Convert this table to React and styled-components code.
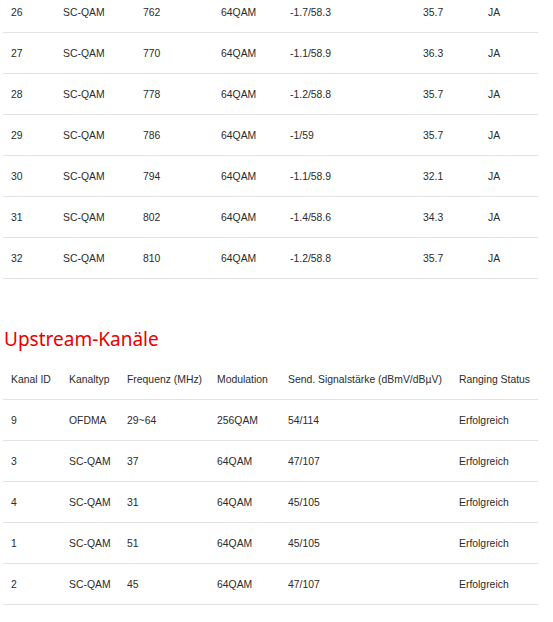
import styled, { createGlobalStyle } from "styled-components";

const downstream = [
  ["26", "SC-QAM", "762", "64QAM", "-1.7/58.3", "35.7", "JA"],
  ["27", "SC-QAM", "770", "64QAM", "-1.1/58.9", "36.3", "JA"],
  ["28", "SC-QAM", "778", "64QAM", "-1.2/58.8", "35.7", "JA"],
  ["29", "SC-QAM", "786", "64QAM", "-1/59", "35.7", "JA"],
  ["30", "SC-QAM", "794", "64QAM", "-1.1/58.9", "32.1", "JA"],
  ["31", "SC-QAM", "802", "64QAM", "-1.4/58.6", "34.3", "JA"],
  ["32", "SC-QAM", "810", "64QAM", "-1.2/58.8", "35.7", "JA"],
];

const upstreamHead = [
  "Kanal ID",
  "Kanaltyp",
  "Frequenz (MHz)",
  "Modulation",
  "Send. Signalstärke (dBmV/dBµV)",
  "Ranging Status",
];

const upstream = [
  ["9", "OFDMA", "29~64", "256QAM", "54/114", "Erfolgreich"],
  ["3", "SC-QAM", "37", "64QAM", "47/107", "Erfolgreich"],
  ["4", "SC-QAM", "31", "64QAM", "45/105", "Erfolgreich"],
  ["1", "SC-QAM", "51", "64QAM", "45/105", "Erfolgreich"],
  ["2", "SC-QAM", "45", "64QAM", "47/107", "Erfolgreich"],
];

const GlobalStyle = createGlobalStyle`
  body {
    margin: 0;
    background: #fff;
    font-family: "Liberation Sans", Arial, sans-serif;
    color: #2b2b2b;
    overflow: hidden;
  }
`;

const Page = styled.div`
  padding: 0 15px 0 3px;
  margin-top: -8px;
`;

const Table = styled.div`
  display: flex;
  flex-direction: column;
`;

const Row = styled.div`
  display: grid;
  grid-template-columns: ${({ cols }) => cols};
  height: 40px;
  align-items: center;
  border-bottom: 1px solid #e2e2e2;
  font-size: 10.4px;
`;

const Cell = styled.div`
  padding-left: 8px;
  white-space: nowrap;
`;

const Title = styled.h2`
  margin: 48px 0 8px 1px;
  font-family: "Noto Sans", sans-serif;
  font-weight: 400;
  font-size: 19px;
  line-height: 24px;
  color: #e60000;
`;

const DOWN_COLS = "52px 80px 78px 69px 133px 65px 58px";
const UP_COLS = "58px 58px 90px 71px 171px 87px";

export default function App() {
  return (
    <Page>
      <GlobalStyle />
      <Table>
        {downstream.map((r) => (
          <Row key={r[0]} cols={DOWN_COLS}>
            {r.map((c, i) => (
              <Cell key={i}>{c}</Cell>
            ))}
          </Row>
        ))}
      </Table>
      <Title>Upstream-Kanäle</Title>
      <Table>
        <Row cols={UP_COLS}>
          {upstreamHead.map((c) => (
            <Cell key={c}>{c}</Cell>
          ))}
        </Row>
        {upstream.map((r) => (
          <Row key={r[0]} cols={UP_COLS}>
            {r.map((c, i) => (
              <Cell key={i}>{c}</Cell>
            ))}
          </Row>
        ))}
      </Table>
    </Page>
  );
}
